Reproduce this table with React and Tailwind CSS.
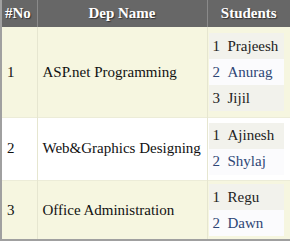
const deps = [
  { no: 1, name: "ASP.net Programming", students: ["Prajeesh", "Anurag", "Jijil"], h: "h-[90px]", bg: "bg-[#f6f6e0]" },
  { no: 2, name: "Web&Graphics Designing", students: ["Ajinesh", "Shylaj"], h: "h-[63px]", bg: "bg-white" },
  { no: 3, name: "Office Administration", students: ["Regu", "Dawn"], h: "h-[60px]", bg: "bg-[#f6f6e0]" },
];

const StudentList = ({ students }) => (
  <ul className="flex flex-col">
    {students.map((s, i) => (
      <li
        key={s}
        className={`h-[26px] flex items-center pl-[4px] ${
          i % 2 === 1 ? "bg-[#fbfbfd] text-[#2e4676]" : "bg-[#f2f2ec] text-[#222]"
        }`}
      >
        <span className="w-[15px]">{i + 1}</span>
        <span>{s}</span>
      </li>
    ))}
  </ul>
);

export default function App() {
  return (
    <div className="w-[291px] h-[244px] bg-white font-['Liberation_Serif',serif]">
      <table className="w-[290px] border-collapse border-l-2 border-b-2 border-[#a0a0a0] text-[15px] text-[#111] font-['Liberation_Serif',serif]">
        <thead>
          <tr className="h-[27px] bg-[#676767] text-white font-bold [text-shadow:1px_1px_1px_#333]">
            <th className="w-[36px] text-left pl-[3px] border-r border-[#8a8a8a]">#No</th>
            <th className="w-[170px] text-center border-r border-[#8a8a8a]">Dep Name</th>
            <th className="text-center">Students</th>
          </tr>
        </thead>
        <tbody>
          {deps.map((d) => (
            <tr key={d.no} className={`${d.h} ${d.bg} border-b border-[#ececd8]`}>
              <td className="pl-[5px] border-r border-[#e6e6d0]">{d.no}</td>
              <td className="pl-[5px] border-r border-[#e6e6d0]">{d.name}</td>
              <td className="pl-[1px] pr-[6px]">
                <StudentList students={d.students} />
              </td>
            </tr>
          ))}
        </tbody>
      </table>
    </div>
  );
}
